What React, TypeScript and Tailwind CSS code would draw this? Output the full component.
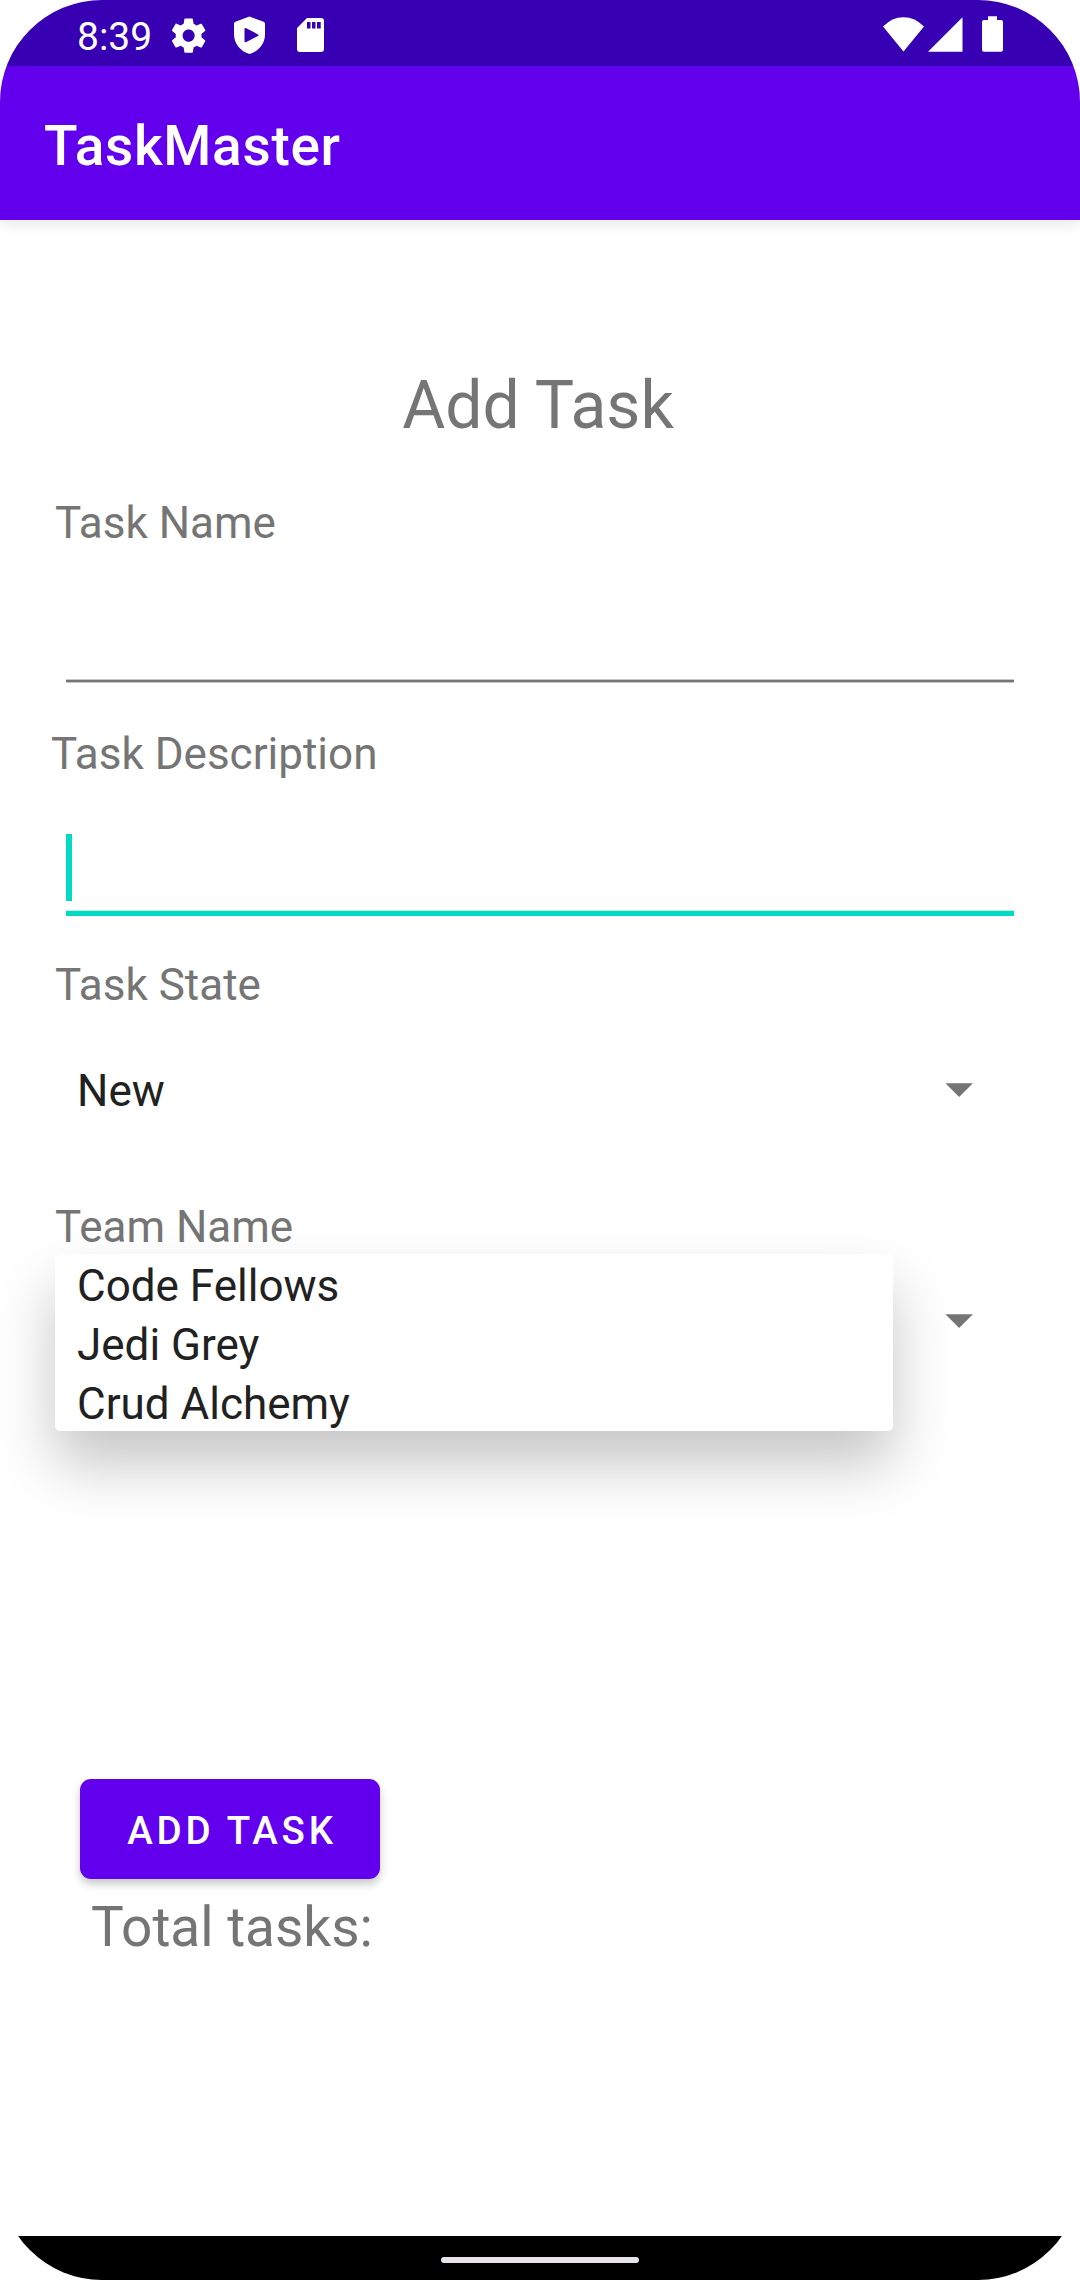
import type { ReactNode } from "react";

const teams = ["Code Fellows", "Jedi Grey", "Crud Alchemy"];

function StatusBar() {
  return (
    <div className="flex h-[66px] items-start bg-[#3700b3] text-white">
      <span className="ml-[77px] mt-[14px] w-[77px] whitespace-nowrap text-[39px] leading-[46px]">8:39</span>
      <svg className="ml-[14px] mt-[14.5px] size-[41.25px]" viewBox="0 0 24 24" fill="currentColor">
        <path d="M19.43 12.98c.04-.32.07-.64.07-.98s-.03-.66-.07-.98l2.11-1.65c.19-.15.24-.42.12-.64l-2-3.46c-.12-.22-.39-.3-.61-.22l-2.49 1c-.52-.4-1.08-.73-1.69-.98l-.38-2.65C14.46 2.18 14.25 2 14 2h-4c-.25 0-.46.18-.49.42l-.38 2.65c-.61.25-1.17.59-1.69.98l-2.49-1c-.23-.09-.49 0-.61.22l-2 3.46c-.13.22-.07.49.12.64l2.11 1.65c-.04.32-.07.65-.07.98s.03.66.07.98l-2.11 1.65c-.19.15-.24.42-.12.64l2 3.46c.12.22.39.3.61.22l2.49-1c.52.4 1.08.73 1.69.98l.38 2.65c.03.24.24.42.49.42h4c.25 0 .46-.18.49-.42l.38-2.65c.61-.25 1.17-.59 1.69-.98l2.49 1c.23.09.49 0 .61-.22l2-3.46c.12-.22.07-.49-.12-.64l-2.11-1.65zM12 15.5c-1.93 0-3.5-1.57-3.5-3.5s1.57-3.5 3.5-3.5 3.5 1.57 3.5 3.5-1.57 3.5-3.5 3.5z" />
      </svg>
      <svg className="ml-[25px] mt-[16px] h-[38px] w-[31px]" viewBox="0 0 31 38" fill="currentColor" fillRule="evenodd">
        <path d="M15.5.5 29.6 5.800q1.400.5 1.400 2V18.500C31 27.500 24.500 35.500 15.500 38 6.500 35.500 0 27.500 0 18.500V7.800q0-1.500 1.400-2ZM10.500 13.500V25q0 2 1.800 1L24 20q1-.8 0-1.600L12.300 12.300q-1.800-.8-1.800 1.200Z" />
      </svg>
      <svg className="ml-[32px] mt-[18px] h-[34px] w-[27px]" viewBox="0 0 27 34" fill="currentColor" fillRule="evenodd">
        <path d="M10 0H24Q27 0 27 3V31Q27 34 24 34H3Q0 34 0 31V10ZM10 4V10.500H13.500V4ZM15 4V10.500H18.500V4ZM20 4V10.500H23.700V4Z" />
      </svg>
      <svg className="ml-auto mt-[17px] h-[35px] w-[41px]" viewBox="0 0 41 35" fill="currentColor">
        <path d="M0 9.500Q9 .2 20.500.2T41 9.500L20.500 34.500Z" />
      </svg>
      <svg className="ml-[3.500px] mt-[17px] h-[35px] w-[35px]" viewBox="0 0 35 35" fill="currentColor">
        <path d="M0 34.700 34.500.3V34.700Z" />
      </svg>
      <svg className="ml-[19.500px] mr-[77px] mt-[16px] h-[36px] w-[21px]" viewBox="0 0 21 36" fill="currentColor">
        <path d="M6 .3H15V4H19Q21 4 21 6V33.700Q21 35.700 19 35.700H2Q0 35.700 0 33.700V6Q0 4 2 4H6Z" />
      </svg>
    </div>
  );
}

function Label({ children, className = "" }: { children: ReactNode; className?: string }) {
  return <div className={`h-[52px] whitespace-nowrap text-[44px] leading-[52px] text-[#757575] ${className}`}>{children}</div>;
}

function Spinner({ value, children }: { value: string; children?: ReactNode }) {
  return (
    <div className="relative flex h-[102px] items-center justify-between pl-[22px] pr-[52px] text-[44px] leading-[52px] text-[#212121]">
      <span>{value}</span>
      <svg className="mb-[2px] h-[16px] w-[28px]" viewBox="0 0 28 16" fill="#757575">
        <path d="M.4 1.250H27.900L14.150 15Z" />
      </svg>
      {children}
    </div>
  );
}

export default function App() {
  return (
    <div className="h-[2280px] w-[1080px] overflow-hidden bg-white">
      <div className="flex h-full flex-col overflow-hidden rounded-[102px] bg-white font-['Roboto',sans-serif]">
        <header className="relative shadow-[0_4px_14px_rgba(0,0,0,0.1)]">
          <StatusBar />
          <div className="flex h-[154px] items-center bg-[#6200ee] pl-[44px] pt-[6px]">
            <h1 className="text-[55px] font-medium leading-[64px] tracking-[0.0125em] text-white">TaskMaster</h1>
          </div>
        </header>

        <main className="flex flex-1 flex-col px-[55px]">
          <h2 className="mt-[147px] h-[78px] whitespace-nowrap pr-[4px] text-center text-[66px] leading-[78px] text-[#757575]">Add Task</h2>

          <Label className="mt-[52px]">Task Name</Label>
          <div className="mx-[11px] flex h-[134px] items-end">
            <div className="h-[4px] w-full border-y border-[#c8c8c8] bg-[#757575]" />
          </div>

          <Label className="-ml-[4px] mt-[45px]">Task Description</Label>
          <div className="mx-[11px] mt-[54px] flex h-[82px] flex-col justify-between">
            <div className="h-[67px] w-[6px] bg-[#03dac5]" />
            <div className="h-[6px] border-t border-[#b5f3ec] bg-[#03dac5]" />
          </div>

          <Label className="mt-[43px]">Task State</Label>
          <div className="mt-[29px]">
            <Spinner value="New" />
          </div>

          <Label className="mt-[59px]">Team Name</Label>
          <div className="mt-[18px]">
            <Spinner value="">
              <ul className="absolute left-0 top-[-17px] h-[177px] w-[838px] rounded-[5.500px] bg-white pl-[22px] shadow-[0_33px_60px_rgba(0,0,0,0.23)]">
                {teams.map((team) => (
                  <li key={team} className="h-[59px] whitespace-nowrap pt-[3px] leading-[59px]">
                    {team}
                  </li>
                ))}
              </ul>
            </Spinner>
          </div>

          <button className="ml-[25px] mt-[406px] h-[100px] w-[300px] whitespace-nowrap rounded-[11px] bg-[#6200ee] pl-[4px] pt-[3px] text-[38.5px] font-medium leading-[46px] tracking-[0.098em] text-white shadow-[0_5px_8px_rgba(0,0,0,0.22)]">
            ADD TASK
          </button>
          <div className="ml-[36px] mt-[16px] h-[64px] whitespace-nowrap text-[55px] leading-[64px] tracking-[-0.05px] text-[#757575]">Total tasks:</div>
        </main>

        <nav className="flex h-[44px] justify-center bg-black pt-[21px]">
          <div className="h-[6px] w-[198px] rounded-full bg-[#e6e4e8]" />
        </nav>
      </div>
    </div>
  );
}
